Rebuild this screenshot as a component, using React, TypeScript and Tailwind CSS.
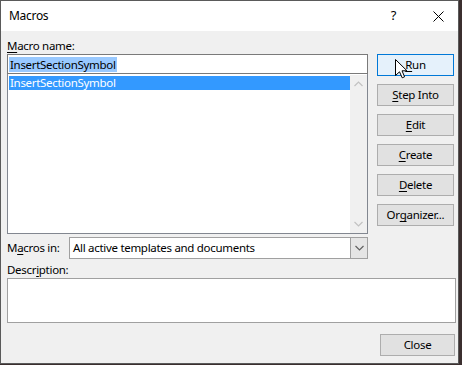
import React from 'react';

const font = { fontFamily: '"Noto Sans", "Open Sans", sans-serif' };

function U({ children }: { children: React.ReactNode }) {
  return <span className="underline underline-offset-2">{children}</span>;
}

function Btn({ children, focus }: { children: React.ReactNode; focus?: boolean }) {
  return (
    <div
      className={
        'flex h-[22px] w-[77px] items-center justify-center border text-black ' +
        (focus ? 'border-[#0078d7] bg-[#e5f1fb]' : 'border-[#adadad] bg-[#e1e1e1]')
      }
    >
      {children}
    </div>
  );
}

function Chevron({ up }: { up?: boolean }) {
  return (
    <svg width="9" height="6" viewBox="0 0 9 6" className="block">
      <path
        d={up ? 'M0.5 5 L4.5 1 L8.5 5' : 'M0.5 1 L4.5 5 L8.5 1'}
        fill="none"
        stroke="currentColor"
        strokeWidth="1.2"
      />
    </svg>
  );
}

export default function App() {
  return (
    <div className="h-[365px] w-[462px] bg-[#3b2f2f]" style={font}>
      <div className="relative flex h-[364px] w-[459px] flex-col border border-[#5a5a5a] bg-[#f0f0f0] text-[11.5px] tracking-[-0.3px] text-black">
        {/* Title bar */}
        <div className="flex h-[30px] items-center bg-white">
          <span className="pl-[8px] text-[12px]">Macros</span>
          <span className="ml-auto mr-[37px] text-[13px]">?</span>
          <svg width="11" height="11" viewBox="0 0 11 11" className="mr-[14px]">
            <path d="M0.5 0.5 L10.5 10.5 M10.5 0.5 L0.5 10.5" stroke="#000" strokeWidth="1" />
          </svg>
        </div>

        {/* Body */}
        <div className="flex pl-[6px] pr-[2px]">
          <div className="flex w-[361px] shrink-0 flex-col pt-[7px]">
            <div className="h-4 leading-4">
              <U>M</U>acro name:
            </div>
            <div className="flex h-[20px] items-center border border-[#7a7a7a] bg-white px-[1px]">
              <span className="bg-[#99c9ff] px-[1px] leading-[15px]">InsertSectionSymbol</span>
            </div>
            <div className="flex h-[160px] border border-t-0 border-[#828790] bg-white pt-[1px] pl-[1px]">
              <div className="flex-1 pt-[1px]">
                <div className="h-[14px] bg-[#3399ff] pl-[1px] leading-[14px] text-white">
                  InsertSectionSymbol
                </div>
              </div>
              <div className="flex w-[17px] flex-col items-center justify-between bg-[#f0f0f0] py-[6px] text-[#c2c2c2]">
                <Chevron up />
                <Chevron />
              </div>
            </div>
            <div className="mt-[3px] flex items-center">
              <span className="w-[62px]">
                M<U>a</U>cros in:
              </span>
              <div className="flex h-[22px] flex-1 border border-[#a0a0a0] bg-white">
                <span className="flex-1 pl-[3px] leading-[20px]">All active templates and documents</span>
                <div className="flex w-[17px] items-center justify-center border-l border-[#a0a0a0] bg-[#e5e5e5] text-[#606060]">
                  <Chevron />
                </div>
              </div>
            </div>
          </div>

          <div className="ml-[9px] flex shrink-0 flex-col gap-[8px] pt-[23px]">
            <Btn focus>
              <U>R</U>un
            </Btn>
            <Btn>
              <U>S</U>tep Into
            </Btn>
            <Btn>
              <U>E</U>dit
            </Btn>
            <Btn>
              <U>C</U>reate
            </Btn>
            <Btn>
              <U>D</U>elete
            </Btn>
            <Btn>
              Or<U>g</U>anizer...
            </Btn>
          </div>
        </div>

        <div className="pl-[6px] pr-[2px]">
          <div className="mt-[3px] h-4 leading-4">
            Descr<U>i</U>ption:
          </div>
          <div className="h-[45px] w-[449px] border border-[#a0a0a0] bg-white" />
          <div className="mt-[11px] flex justify-end pr-[1px]">
            <div className="flex h-[22px] w-[75px] items-center justify-center border border-[#adadad] bg-[#e1e1e1]">
              Close
            </div>
          </div>
        </div>

        {/* mouse pointer */}
        <svg
          width="13"
          height="20"
          viewBox="0 0 13 20"
          className="absolute left-[394px] top-[58px]"
        >
          <path
            d="M0.5 0.5 L0.5 16.5 L4.5 12.8 L7.2 18.8 L9.6 17.8 L7 11.8 L12 11.8 Z"
            fill="#fff"
            stroke="#000"
            strokeWidth="1"
            strokeLinejoin="round"
          />
        </svg>
      </div>
    </div>
  );
}
